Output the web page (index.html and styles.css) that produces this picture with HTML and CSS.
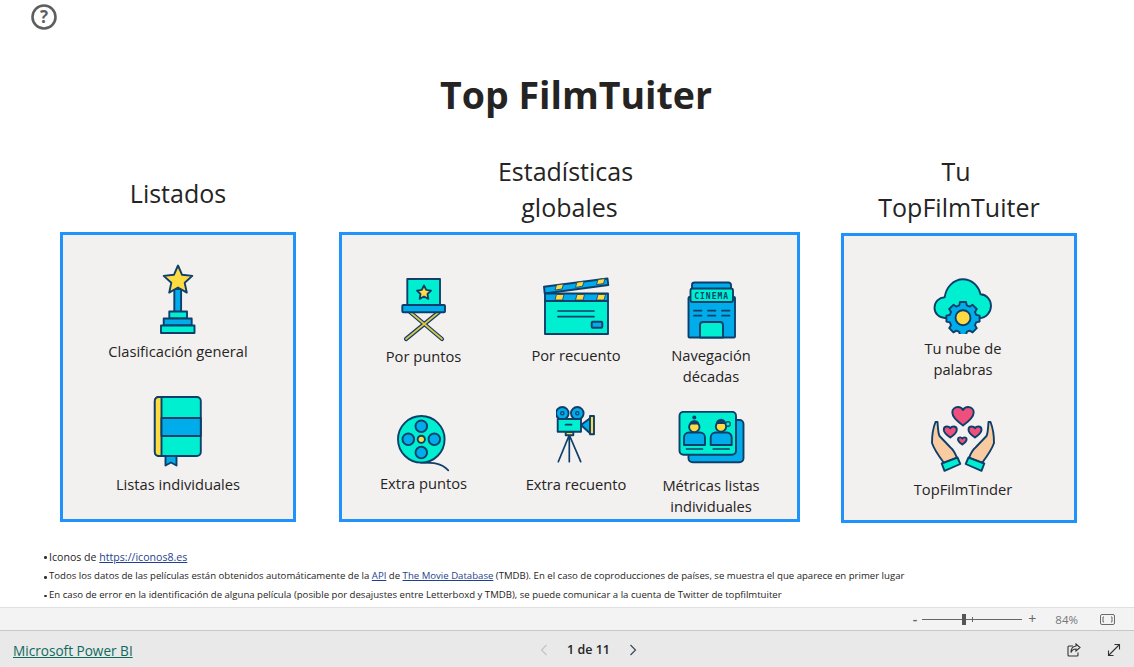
FILE: index.html
```html
<!DOCTYPE html>
<html lang="es">
<head>
<meta charset="utf-8">
<title>Top FilmTuiter</title>
<link rel="stylesheet" href="styles.css">
</head>
<body>
<div class="page">
  <main class="report">
    <div class="help">
      <svg class="help-icon" viewBox="31 4 26 26" width="26" height="26"><circle cx="44" cy="17" r="11.5" fill="none" stroke="#5e5e5e" stroke-width="2.6"/><text x="44" y="23" text-anchor="middle" class="help-mark">?</text></svg>
    </div>
    <h1 class="title">Top FilmTuiter</h1>
    <div class="sections">
      <section class="section section-a">
        <h2 class="heading heading-single">Listados</h2>
        <div class="card card-stack">
          <div class="tile tile-trophy">
            <svg class="ico" viewBox="159 264 36 71" width="36" height="71">
              <g class="ln">
                <rect x="173.3" y="289" width="6.8" height="23" fill="#00acea"/>
                <rect x="168.3" y="311.5" width="17.7" height="7" fill="#00efd1"/>
                <rect x="162.7" y="318.5" width="28" height="7" fill="#00acea"/>
                <rect x="160" y="325.5" width="33.5" height="7.5" fill="#00efd1"/>
                <path d="M177 265.500l4.100 9.300 10.200 1.100-7.600 6.800 2.100 9.900-8.800-5.100-8.800 5.100 2.100-9.900-7.600-6.800 10.200-1.100z" fill="#fedb41"/>
              </g>
            </svg>
            <span class="label">Clasificación general</span>
          </div>
          <div class="tile tile-book">
            <svg class="ico" viewBox="152 395 50 71" width="50" height="71">
              <g class="ln">
                <path d="M164.500 454v10.500l5.500-3 5.500 3V454z" fill="#00acea"/>
                <rect x="153.800" y="396" width="46" height="59" rx="4" fill="#00efd1"/>
                <path d="M160.500 396h-2.700a4 4 0 0 0-4 4v51a4 4 0 0 0 4 4h2.700z" fill="#fedb41"/>
                <rect x="160.500" y="417" width="39.300" height="18" fill="#00acea"/>
              </g>
            </svg>
            <span class="label">Listas individuales</span>
          </div>
        </div>
      </section>

      <section class="section section-b">
        <h2 class="heading heading-shift"><span>Estadísticas<br><span class="line-right">globales</span></span></h2>
        <div class="card card-grid">
          <div class="tile tile-chair">
            <svg class="ico" viewBox="402 278 46 64" width="46" height="64">
              <path d="M411 312l32 27M440 312l-33 27" fill="none" stroke="#0e3f6b" stroke-width="4.200" stroke-linecap="round"/>
              <path d="M411 312l32 27M440 312l-33 27" fill="none" stroke="#e3c344" stroke-width="1.700" stroke-linecap="round"/>
              <g class="ln">
                <rect x="408.300" y="279" width="32.700" height="26" fill="#00efd1"/>
                <rect x="403.300" y="305" width="42.700" height="7.300" rx="1" fill="#00acea"/>
                <path d="M425 285.500l2.200 4.400 4.800.7-3.500 3.400.8 4.800-4.300-2.300-4.300 2.300.8-4.800-3.500-3.400 4.800-.7z" fill="#fedb41"/>
              </g>
            </svg>
            <span class="label">Por puntos</span>
          </div>
          <div class="tile tile-clap">
            <svg class="ico" viewBox="542 277 68 59" width="68" height="59">
              <g class="ln">
                <path d="M544 286.700l63.500-8.200.8 6.500-63.600 8.500z" fill="#00acea"/>
                <rect x="545" y="293.500" width="63" height="7.500" fill="#00acea"/>
                <rect x="545" y="301" width="63" height="33" fill="#00efd1"/>
                <rect x="591.700" y="321.700" width="10.600" height="6" rx="1" fill="#00acea"/>
              </g>
              <path d="M556.500 285l7-1-1.500 5-7 1zM577 282.300l7-1-1.500 5-7 1zM598 279.600l7-1-1.500 5-7 1zM556.500 294.500h7.500l-1.500 5.500h-7.500zM577 294.500h7.500l-1.500 5.500h-7.500zM598 294.500h7.500l-1.500 5.500h-7.500z" fill="#fedb41" stroke="#0e3f6b" stroke-width=".8"/>
              <path d="M558 311h36M558 316.700h36" class="ln-open"/>
            </svg>
            <span class="label">Por recuento</span>
          </div>
          <div class="tile tile-cinema">
            <svg class="ico" viewBox="688 281 49 58" width="49" height="58">
              <g class="ln">
                <path d="M693 289v-4a2.500 2.500 0 0 1 2.500-2.500h34a2.500 2.500 0 0 1 2.500 2.500v4z" fill="#00acea"/>
                <rect x="689.500" y="297" width="46.500" height="40.500" rx="1" fill="#00acea"/>
                <rect x="691.500" y="288.500" width="42.500" height="13.500" rx="2" fill="#00efd1"/>
                <path d="M701 337.500v-12.500a3 3 0 0 1 3-3h17a3 3 0 0 1 3 3v12.500z" fill="#00efd1"/>
              </g>
              <path d="M695 310.700h7.500M709 310.700h7.500M723 310.700h7.500M695 315.700h7.500M709 315.700h7.500M723 315.700h7.500" class="ln-open"/>
              <text x="712.700" y="298.500" text-anchor="middle" class="cinema-mark">CINEMA</text>
            </svg>
            <span class="label">Navegación<br>décadas</span>
          </div>
          <div class="tile tile-reel">
            <svg class="ico" viewBox="398 415 53 58" width="53" height="58">
              <path d="M422 462.700c12 0 20 0 27.300 7.600" class="ln-open"/>
              <g class="ln">
                <circle cx="422.300" cy="439.300" r="23.300" fill="#00efd1"/>
                <circle cx="422.300" cy="426.300" r="5.800" fill="#00acea"/>
                <circle cx="409.300" cy="439.300" r="5.800" fill="#00acea"/>
                <circle cx="435.300" cy="439.300" r="5.800" fill="#00acea"/>
                <circle cx="422.300" cy="452.600" r="5.800" fill="#00acea"/>
                <circle cx="422.300" cy="439.300" r="3.600" fill="#fedb41"/>
              </g>
            </svg>
            <span class="label">Extra puntos</span>
          </div>
          <div class="tile tile-camera">
            <svg class="ico" viewBox="556 406 40 57" width="40" height="57">
              <path d="M569.300 435l-11 26.700M569.300 435v26.700M569.300 435l11.400 26.700" class="ln-open"/>
              <g class="ln">
                <circle cx="562.300" cy="413.300" r="6.300" fill="#00acea"/>
                <circle cx="577.300" cy="413.300" r="6.300" fill="#00acea"/>
                <rect x="565.700" y="431.700" width="7.600" height="3.500" fill="#fedb41"/>
                <rect x="557.700" y="419" width="23.300" height="12.700" fill="#00efd1"/>
                <path d="M581 425l9-6.700v15z" fill="#00acea"/>
                <rect x="590" y="416" width="4" height="18.300" fill="#fedb41"/>
              </g>
              <circle cx="562.300" cy="413.300" r="1.700" fill="none" stroke="#0e3f6b" stroke-width="1.200"/>
              <circle cx="577.300" cy="413.300" r="1.700" fill="none" stroke="#0e3f6b" stroke-width="1.200"/>
              <path d="M565.500 424.700h6" class="ln-open"/>
            </svg>
            <span class="label">Extra recuento</span>
          </div>
          <div class="tile tile-metrics">
            <svg class="ico" viewBox="678 411 67 53" width="67" height="53">
              <g class="ln">
                <rect x="688.500" y="420" width="55" height="42.300" rx="4" fill="#00acea"/>
                <rect x="679.500" y="411.800" width="56.500" height="43" rx="4" fill="#00efd1"/>
                <path d="M684 445v-7.500a5 5 0 0 1 5-5h11a5 5 0 0 1 5 5v7.500z" fill="#00acea"/>
                <path d="M710.700 445v-7.500a5 5 0 0 1 5-5h11a5 5 0 0 1 5 5v7.500z" fill="#00acea"/>
                <circle cx="694.300" cy="427" r="5.200" fill="#fedb41"/>
                <circle cx="721" cy="426.500" r="5.200" fill="#fedb41"/>
              </g>
              <path d="M689.200 424.500a5.200 5.200 0 0 1 10.200 0zM715.800 424a5.200 5.200 0 0 1 10.400 0z" fill="#0e3f6b"/>
              <circle cx="694.300" cy="417.500" r="2" fill="#0e3f6b"/>
              <circle cx="728" cy="424" r="2.300" fill="#00efd1" stroke="#0e3f6b" stroke-width="1.200"/>
              <path d="M686.500 449h16M713.200 449h16" class="ln-open"/>
            </svg>
            <span class="label">Métricas listas<br>individuales</span>
          </div>
        </div>
      </section>

      <section class="section section-c">
        <h2 class="heading"><span><span class="line-left">Tu</span><br>TopFilmTuiter</span></h2>
        <div class="card card-stack card-right">
          <div class="tile tile-cloud">
            <svg class="ico" viewBox="934 278 60 56" width="60" height="56">
              <path class="ln" fill="#00efd1" d="M946 318c-6 0-10.500-4.700-10.500-10.300 0-5.800 4.500-10.200 10.200-10.500 1.500-10 9-18 18.300-18 8.500 0 15.500 6.500 17.500 15 6 .3 10.500 5.500 10.500 11.500 0 6.500-5 12.300-11.500 12.300z"/>
              <path class="ln" fill="#00acea" d="M961 302h6l.8 3.400 2.800 1.200 3-1.800 4.200 4.200-1.800 3 1.200 2.800 3.400.8v6l-3.400.8-1.200 2.800 1.800 3-4.200 4.200-3-1.800-2.800 1.200-.8 3.400h-6l-.8-3.400-2.800-1.200-3 1.800-4.200-4.200 1.800-3-1.200-2.800-3.400-.8v-6l3.400-.8 1.200-2.800-1.800-3 4.200-4.200 3 1.800 2.800-1.200z"/>
              <circle class="ln" cx="964" cy="317.700" r="7.500" fill="#fedb41"/>
            </svg>
            <span class="label">Tu nube de<br>palabras</span>
          </div>
          <div class="tile tile-hands">
            <svg class="ico" viewBox="929 404 66 67" width="66" height="67">
              <defs>
                <g id="hand">
                  <path class="ln" fill="#f9cba0" d="M934.500 420c-2 5-3.500 14-3.500 21 2 6 7.500 14 12 20l13-5c-1.500-4-4-8.500-6.500-10.500l-11-11.500c-1.500-3-1.500-8-2-14z"/>
                  <path class="ln" fill="#00efd1" d="M940.700 461.500l15.800-6 2.800 6.500-15.800 6.800z"/>
                </g>
              </defs>
              <use href="#hand"/>
              <use href="#hand" transform="translate(1924 0) scale(-1 1)"/>
              <g class="ln" fill="#ee4f7c">
                <path d="M962 423.500c-7-5-10.700-8.500-10.700-13 0-3.500 2.700-5.500 5.700-5.500 2.200 0 4 1 5 3 1-2 2.800-3 5-3 3 0 5.700 2 5.700 5.500 0 4.500-3.700 8-10.700 13z"/>
                <path d="M949.300 435.500c-4.300-3-6.500-5-6.500-7.800 0-2 1.600-3.200 3.300-3.200 1.300 0 2.500.6 3.200 1.800.7-1.200 1.900-1.800 3.200-1.800 1.700 0 3.300 1.200 3.300 3.200 0 2.800-2.200 4.800-6.500 7.800z"/>
                <path d="M974 435.500c-4.300-3-6.500-5-6.500-7.800 0-2 1.600-3.200 3.300-3.200 1.300 0 2.500.6 3.200 1.800.7-1.200 1.900-1.800 3.200-1.800 1.700 0 3.300 1.200 3.300 3.200 0 2.800-2.200 4.800-6.500 7.800z"/>
                <path d="M961.300 442.500c-2.800-2-4.300-3.300-4.300-5 0-1.300 1-2.100 2.200-2.100.9 0 1.600.4 2.100 1.200.5-.8 1.200-1.200 2.100-1.200 1.200 0 2.200.8 2.200 2.100 0 1.700-1.500 3-4.300 5z"/>
              </g>
            </svg>
            <span class="label">TopFilmTinder</span>
          </div>
        </div>
      </section>
    </div>
    <div class="notes">
      <p class="note note-first">Iconos de <a href="#">https://iconos8.es</a></p>
      <p class="note">Todos los datos de las películas están obtenidos automáticamente de la <a href="#">API</a> de <a href="#">The Movie Database</a> (TMDB). En el caso de coproducciones de países, se muestra el que aparece en primer lugar</p>
      <p class="note">En caso de error en la identificación de alguna película (posible por desajustes entre Letterboxd y TMDB), se puede comunicar a la cuenta de Twitter de topfilmtuiter</p>
    </div>
  </main>

  <div class="statusbar">
    <span class="zoom-sign">-</span>
    <span class="slider"><span class="slider-tick"></span><span class="slider-thumb"></span></span>
    <span class="zoom-sign zoom-plus">+</span>
    <span class="zoom-value">84%</span>
    <svg class="fit" viewBox="0 0 15 11" width="15" height="11"><rect x=".5" y=".5" width="14" height="10" rx="1.500" fill="none" stroke="#6b6b6b"/><path d="M4 3H3v5h1M11 3h1v5h-1" fill="none" stroke="#6b6b6b"/></svg>
  </div>

  <footer class="footer">
    <a class="brand" href="#">Microsoft Power BI</a>
    <div class="pager">
      <svg class="chev" viewBox="0 0 8 12" width="8" height="12"><path d="M6.500 1L1.500 6l5 5" fill="none" stroke="#c4c4c4" stroke-width="1.200"/></svg>
      <span class="pager-text">1 de 11</span>
      <svg class="chev" viewBox="0 0 8 12" width="8" height="12"><path d="M1.500 1l5 5-5 5" fill="none" stroke="#3a4a5a" stroke-width="1.200"/></svg>
    </div>
    <div class="actions">
      <svg viewBox="0 0 14 14" width="14" height="14"><path d="M6 3H2a1 1 0 0 0-1 1v8a1 1 0 0 0 1 1h8a1 1 0 0 0 1-1v-2.500" fill="none" stroke="#333" stroke-width="1.100"/><path d="M9 1l4 3.500L9 8V6C6.500 6 5 7 4 9.500 4 6 6 3.300 9 3z" fill="none" stroke="#333" stroke-width="1.100"/></svg>
      <svg viewBox="0 0 14 14" width="14" height="14"><path d="M1.500 12.500l11-11M7.500 1.500h5v5M1.500 7.500v5h5" fill="none" stroke="#333" stroke-width="1.100"/></svg>
    </div>
  </footer>
</div>
</body>
</html>
```
FILE: styles.css
```css
* { box-sizing: border-box; }

html, body {
  margin: 0;
  height: 100%;
  overflow: hidden;
}

body {
  font-family: "Open Sans", "Noto Sans", "Liberation Sans", sans-serif;
  color: #252423;
  background: #fff;
}

.page {
  display: flex;
  flex-direction: column;
  height: 667px;
}

.report {
  flex: 1;
  min-height: 0;
  padding-top: 4px;
}

.help {
  height: 26px;
  padding-left: 31px;
}

.help-icon { display: block; }

.help-mark {
  font: 700 17px "Open Sans", sans-serif;
  fill: #5e5e5e;
}

.title {
  margin: 40px 0 0;
  padding-left: 18px;
  height: 50px;
  font-size: 37.500px;
  line-height: 50px;
  font-weight: 700;
  text-align: center;
  color: #252423;
}

.sections {
  display: flex;
  padding-left: 60px;
  margin-top: 34px;
}

.section { flex: none; }
.section-a { width: 236px; margin-right: 43px; }
.section-b { width: 461px; margin-right: 41px; }
.section-c { width: 236px; }

.heading {
  display: flex;
  align-items: flex-end;
  justify-content: center;
  height: 78px;
  margin: 0;
  padding-bottom: 7px;
  font-size: 25px;
  line-height: 36px;
  font-weight: 400;
  text-align: center;
}

.heading-single { padding-bottom: 21px; }
.heading-shift { padding-right: 8px; }
.line-right { padding-left: 8px; }
.line-left { padding-right: 6px; }

.card {
  height: 290px;
  border: 3px solid #1f92fb;
  background: #f3f1f0;
}

.card-right {
  margin-top: 1px;
  padding-left: 8px;
}

.card-stack {
  display: flex;
  flex-direction: column;
  align-items: center;
}

.card-grid {
  display: grid;
  grid-template-columns: 163px 142px 128px;
  grid-template-rows: 130px 1fr;
}

.tile {
  display: flex;
  flex-direction: column;
  align-items: center;
}

.ico {
  display: block;
  flex: none;
}

.label {
  font-size: 14.700px;
  line-height: 21px;
  text-align: center;
  white-space: nowrap;
}

.ln {
  stroke: #0e3f6b;
  stroke-width: 1.900;
  stroke-linejoin: round;
}

.ln-open {
  fill: none;
  stroke: #0e3f6b;
  stroke-width: 1.700;
  stroke-linecap: round;
}

.cinema-mark {
  font: 700 8px "DejaVu Sans Mono", monospace;
  fill: #0e3f6b;
  letter-spacing: 1px;
}

/* first column */
.tile-trophy { padding-top: 29px; }
.tile-trophy .label { margin-top: 6px; }
.tile-book { padding-top: 34px; }
.tile-book .label { margin-top: 7px; }

/* middle grid */
.tile-chair { padding-top: 43px; }
.tile-chair .label { margin-top: 4px; }
.tile-clap { padding-top: 42px; }
.tile-clap .label { margin-top: 9px; }
.tile-cinema { padding-top: 46px; }
.tile-cinema .label { margin-top: 6px; }
.tile-reel { padding-top: 50px; }
.tile-reel .label { margin-top: 0; }
.tile-camera { padding-top: 41px; }
.tile-camera .label { margin-top: 11px; }
.tile-metrics { padding-top: 46px; }
.tile-metrics .label { margin-top: 11px; }

/* right column */
.tile-cloud { padding-top: 42px; }
.tile-cloud .label { margin-top: 4px; }
.tile-hands { padding-top: 26px; }
.tile-hands .label { margin-top: 6px; }

.notes {
  margin-top: 24px;
  padding-left: 49px;
}

.note {
  position: relative;
  margin: 0;
  font-size: 9.600px;
  line-height: 18.500px;
  white-space: nowrap;
}

.note::before {
  content: "";
  position: absolute;
  left: -5px;
  top: 9px;
  width: 2.500px;
  height: 2.500px;
  border-radius: 50%;
  background: #333;
}

.note-first {
  font-size: 10.600px;
  line-height: 20px;
}

.note a { color: #1f3f8f; }

.statusbar {
  flex: none;
  display: flex;
  align-items: center;
  height: 23px;
  padding-right: 19px;
  justify-content: flex-end;
  background: #f3f3f3;
  border-top: 1px solid #e0e0e0;
  font-size: 11px;
  color: #666;
}

.zoom-sign {
  font-size: 14px;
  line-height: 1;
  margin-right: 5px;
  font-weight: 600;
}

.zoom-plus {
  margin: 0 0 0 6px;
  font-weight: 400;
}

.slider {
  position: relative;
  display: block;
  width: 100px;
  height: 1px;
  background: #666;
}

.slider-tick {
  position: absolute;
  left: 50px;
  top: -2px;
  width: 1px;
  height: 5px;
  background: #666;
}

.slider-thumb {
  position: absolute;
  left: 40px;
  top: -5px;
  width: 4px;
  height: 11px;
  background: #555;
}

.zoom-value { margin-left: 19px; font-size: 11.500px; color: #777; }
.fit { margin-left: 22px; }

.footer {
  flex: none;
  display: grid;
  grid-template-columns: 540px auto 1fr;
  align-items: center;
  height: 37px;
  padding-top: 1px;
  background: #e9e9e9;
  border-top: 1px solid #c8c8c8;
}

.brand {
  padding: 1px 0 0 13px;
  font-size: 13.600px;
  color: #0d6b5e;
  font-weight: 500;
}

.pager {
  display: flex;
  align-items: center;
  gap: 19px;
}

.pager-text {
  font-size: 12.500px;
  font-weight: 600;
  color: #252423;
}

.actions {
  display: flex;
  justify-content: flex-end;
  gap: 26px;
  padding-right: 13px;
}

.actions svg { display: block; }
```
